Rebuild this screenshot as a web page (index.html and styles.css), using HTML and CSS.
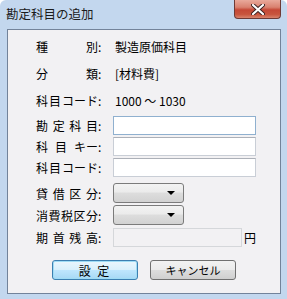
FILE: index.html
```html
<!DOCTYPE html>
<html lang="ja">
<head>
    <meta charset="UTF-8">
    <title>勘定科目の追加</title>
    <link rel="stylesheet" href="styles.css">
</head>
<body>

<div class="window">
    <div class="titlebar">
        <span class="title">勘定科目の追加</span>
        <button class="close-btn" aria-label="閉じる">
            <svg width="14" height="11" viewBox="0 0 14 11">
                <path d="M2 1 L12 10 M12 1 L2 10" stroke="#3a2020" stroke-width="4" stroke-linecap="round"/>
                <path d="M2 1 L12 10 M12 1 L2 10" stroke="#fff" stroke-width="2.2" stroke-linecap="round"/>
            </svg>
        </button>
    </div>

    <div class="client">
        <div class="info-row">
            <span class="lbl"><span class="lbl-text">種別</span>:</span>
            <span class="val">製造原価科目</span>
        </div>
        <div class="info-row">
            <span class="lbl"><span class="lbl-text">分類</span>:</span>
            <span class="val">[材料費]</span>
        </div>
        <div class="info-row">
            <span class="lbl"><span class="lbl-text">科目<span class="grp">コード</span></span>:</span>
            <span class="val">1000 〜 1030</span>
        </div>

        <div class="field-row first">
            <span class="lbl"><span class="lbl-text">勘定科目</span>:</span>
            <input type="text" class="textbox focused">
        </div>
        <div class="field-row">
            <span class="lbl"><span class="lbl-text">科目<span class="grp">キー</span></span>:</span>
            <input type="text" class="textbox">
        </div>
        <div class="field-row">
            <span class="lbl"><span class="lbl-text">科目<span class="grp">コード</span></span>:</span>
            <input type="text" class="textbox">
        </div>

        <div class="field-row combo-row first-combo">
            <span class="lbl"><span class="lbl-text">貸借区分</span>:</span>
            <div class="combo"><span class="arrow"></span></div>
        </div>
        <div class="field-row combo-row">
            <span class="lbl"><span class="lbl-text">消費税区分</span>:</span>
            <div class="combo"><span class="arrow"></span></div>
        </div>
        <div class="field-row balance">
            <span class="lbl"><span class="lbl-text">期首残高</span>:</span>
            <input type="text" class="textbox short" disabled>
            <span class="unit">円</span>
        </div>

        <div class="buttons">
            <button class="btn default-btn">設 定</button>
            <button class="btn">キャンセル</button>
        </div>
    </div>
</div>

</body>
</html>
```

FILE: styles.css
```css
body {
    margin: 0;
    font-family: "Noto Sans CJK JP", "Noto Sans", sans-serif;
    font-size: 12px;
    color: #000;
    background: #fff;
}
.window {
    width: 287px;
    height: 299px;
    box-sizing: border-box;
    background: #c3d7ee;
    border-radius: 6px 6px 0 0;
    display: flex;
    flex-direction: column;
}
.titlebar {
    height: 29px;
    display: flex;
    justify-content: space-between;
    align-items: flex-start;
}
.title {
    margin: 5px 0 0 6px;
    font-size: 12.5px;
    line-height: 17px;
    color: #1b1b1b;
}
.close-btn {
    width: 47px;
    height: 19px;
    margin-right: 6px;
    padding: 0;
    border: 1px solid #6e3a36;
    border-top: none;
    border-radius: 0 0 4px 4px;
    background: linear-gradient(#e9a99b 0%, #d98270 40%, #c54836 55%, #c8553e 80%, #d8826c 100%);
    display: flex;
    justify-content: center;
    align-items: center;
}
.client {
    margin: 0 6px 0 7px;
    height: 265px;
    box-sizing: border-box;
    border: 1px solid #73839a;
    background: #f2f1f3;
    padding: 3px 0 0 28px;
    display: flex;
    flex-direction: column;
}
.info-row, .field-row {
    display: flex;
    align-items: center;
}
.info-row {
    height: 27px;
}
.lbl {
    width: 77px;
    flex-shrink: 0;
    display: flex;
    align-items: center;
}
.lbl-text {
    display: inline-block;
    width: 62px;
    text-align: justify;
    text-align-last: justify;
    white-space: nowrap;
}
.grp {
    display: inline-block;
}
.val {
    padding-left: 2px;
}
.field-row {
    height: 19px;
    margin-top: 2px;
}
.field-row.first {
    margin-top: 2px;
}
.field-row.combo-row {
    height: 20px;
}
.field-row.first-combo {
    margin-top: 6px;
}
.field-row.balance {
    margin-top: 3px;
}
.textbox {
    width: 143px;
    height: 19px;
    box-sizing: border-box;
    margin: 0;
    padding: 0 2px;
    border: 1px solid #c9ced6;
    border-top-color: #acb0b8;
    background: #fff;
    font: inherit;
}
.textbox.focused {
    border-color: #8fb0cf;
}
.textbox.short {
    width: 129px;
    background: #f2f1f3;
    border-color: #d5d7da;
}
.unit {
    margin-left: 2px;
}
.combo {
    position: relative;
    width: 71px;
    height: 20px;
    box-sizing: border-box;
    border: 1px solid #7b7b7b;
    border-radius: 3px;
    background: linear-gradient(#f3f3f3 0%, #ebebeb 45%, #dddddd 50%, #d2d2d2 100%);
}
.arrow {
    position: absolute;
    right: 8px;
    top: 7px;
    border-left: 4px solid transparent;
    border-right: 4px solid transparent;
    border-top: 4px solid #000;
}
.buttons {
    margin-top: 13px;
    margin-left: -28px;
    display: flex;
    justify-content: center;
    gap: 12px;
}
.btn {
    width: 86px;
    height: 20px;
    box-sizing: border-box;
    padding: 0;
    border: 1px solid #707070;
    border-radius: 3px;
    background: linear-gradient(#f2f2f2 0%, #ebebeb 48%, #dddddd 52%, #cfcfcf 100%);
    font: inherit;
    font-size: 11px;
    color: #000;
}
.default-btn {
    border-color: #3c7fb1;
    box-shadow: inset 0 0 0 1px #9fdcf5;
    background: linear-gradient(#eaf6fd 0%, #d9f0fc 48%, #bee6fd 52%, #a7d9f5 100%);
    font-size: 12px;
    letter-spacing: 2px;
}
```
